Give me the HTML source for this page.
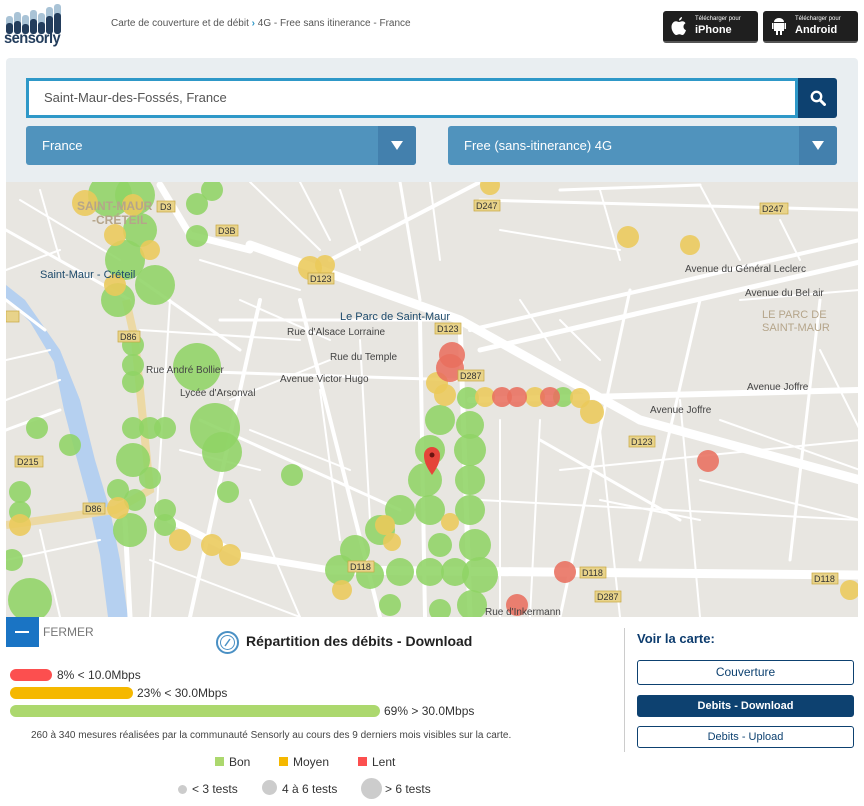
<!DOCTYPE html>
<html><head><meta charset="utf-8">
<style>
*{box-sizing:border-box;margin:0;padding:0}
body{width:864px;height:806px;background:#fff;font-family:"Liberation Sans",sans-serif;position:relative;overflow:hidden;color:#333}
.abs{position:absolute}
.btn{position:absolute;background:#1f1f1f;border-radius:3px;color:#fff;border-bottom:2px solid #555}
.btn small{position:absolute;left:32px;top:5px;font-size:6px}
.btn b{position:absolute;left:32px;top:13px;font-size:11px;font-weight:bold}
.dd{position:absolute;top:126px;height:39px;background:#5093bd;border-radius:3px;color:#fff;font-size:13px;line-height:39px;padding-left:16px}
.dd .ar{position:absolute;right:0;top:0;width:38px;height:39px;background:#4380ad;border-radius:0 3px 3px 0}
.dd .ar:after{content:"";position:absolute;left:13px;top:15px;border-left:6px solid transparent;border-right:6px solid transparent;border-top:9px solid #fff}
.bar{position:absolute;left:10px;height:12px;border-radius:6px}
.lab{position:absolute;font-size:12px;color:#333}
.vb{position:absolute;left:637px;width:217px;height:25px;border:1px solid #0d4170;border-radius:3px;text-align:center;font-size:12px;line-height:23px;color:#0d4170}
</style></head><body>
<!-- logo -->
<svg class="abs" style="left:6px;top:4px" width="58" height="30" viewBox="0 0 58 30">
<g fill="#a9c3d6"><rect x="0" y="12" width="7" height="18" rx="3"/><rect x="8" y="8" width="7" height="22" rx="3"/><rect x="16" y="11" width="7" height="19" rx="3"/><rect x="24" y="6" width="7" height="24" rx="3"/><rect x="32" y="9" width="7" height="21" rx="3"/><rect x="40" y="3" width="7" height="27" rx="3"/><rect x="48" y="0" width="7" height="30" rx="3"/></g>
<g fill="#233d5c"><rect x="0" y="19" width="7" height="11" rx="3"/><rect x="8" y="17" width="7" height="13" rx="3"/><rect x="16" y="20" width="7" height="10" rx="3"/><rect x="24" y="15" width="7" height="15" rx="3"/><rect x="32" y="18" width="7" height="12" rx="3"/><rect x="40" y="12" width="7" height="18" rx="3"/><rect x="48" y="9" width="7" height="21" rx="3"/></g>
</svg>
<div class="abs" style="left:4px;top:30px;font-size:16px;font-weight:bold;color:#233d5c;letter-spacing:-0.6px;transform:scaleX(0.92);transform-origin:left">sensorly</div>
<div class="abs" style="left:111px;top:18px;font-size:10px;color:#555">Carte de couverture et de débit <span style="color:#2e98c8;font-weight:bold">›</span> 4G - Free sans itinerance - France</div>
<div class="btn" style="left:663px;top:11px;width:95px;height:32px"><svg class="abs" style="left:8px;top:6px" width="16" height="19" viewBox="0 0 16 19"><path d="M11 0c0 2-1.5 3.5-3 3.5C8 1.8 9.5 0.2 11 0zM8 5c1 0 2-.8 3.2-.8 1.5 0 2.7.8 3.3 2-3 1.7-2.5 5.8.5 7-.7 2-2 4.8-3.6 4.8-1.2 0-1.6-.7-3-.7s-2 .7-3.1.7C3.5 18 .5 14 .5 10 .5 6.6 2.7 4.3 5 4.3c1.2 0 2.1.7 3 .7z" fill="#fff"/></svg><small>Télécharger pour</small><b>iPhone</b></div>
<div class="btn" style="left:763px;top:11px;width:95px;height:32px"><svg class="abs" style="left:9px;top:6px" width="14" height="19" viewBox="0 0 14 19"><path d="M2 5a5 4 0 0 1 10 0z M0 6h1.5v6H0z M12.5 6H14v6h-1.5z M2 6h10v8H2z M4 14h2v4H4z M8 14h2v4H8z" fill="#fff"/></svg><small>Télécharger pour</small><b>Android</b></div>
<!-- search panel -->
<div class="abs" style="left:6px;top:58px;width:852px;height:124px;background:#e9eef1;border-radius:4px 4px 0 0"></div>
<div class="abs" style="left:26px;top:78px;width:772px;height:40px;border:3px solid #2e98c8;background:#fff;font-size:13px;color:#555;line-height:34px;padding-left:15px">Saint-Maur-des-Fossés, France</div>
<div class="abs" style="left:798px;top:78px;width:39px;height:40px;background:#0d4170;border-radius:0 3px 3px 0"><svg class="abs" style="left:12px;top:12px" width="16" height="16" viewBox="0 0 16 16"><circle cx="6.5" cy="6.5" r="4.7" stroke="#fff" stroke-width="2.4" fill="none"/><path d="M10 10l4.5 4.5" stroke="#fff" stroke-width="3" stroke-linecap="round"/></svg></div>
<div class="dd" style="left:26px;width:390px">France<div class="ar"></div></div>
<div class="dd" style="left:448px;width:389px">Free (sans-itinerance) 4G<div class="ar"></div></div>
<!-- map -->
<svg class="abs" style="left:6px;top:182px" width="852" height="435" viewBox="6 182 852 435" font-family="Liberation Sans" font-size="10" fill="#444">
<rect x="6" y="182" width="852" height="435" fill="#e8e6e1"/>
<path d="M6 285 L25 300 L60 350 L80 400 L95 460 L110 510 L120 560 L128 617 L108 617 L100 555 L88 500 L75 452 L64 410 L54 362 L30 322 L6 298Z" fill="#b5d0f0"/>
<g stroke="#fff" stroke-linecap="round" fill="none" stroke-width="2">
<path d="M20 200 L120 260"/><path d="M40 190 L60 260"/><path d="M6 360 L50 350"/><path d="M6 400 L60 380"/><path d="M6 560 L100 540"/><path d="M40 530 L60 617"/><path d="M140 330 L300 340"/><path d="M170 300 L150 617"/><path d="M240 300 L330 340"/><path d="M150 560 L300 617"/><path d="M250 500 L300 617"/><path d="M230 400 L330 360"/><path d="M320 390 L340 540"/><path d="M360 340 L370 520"/><path d="M500 420 L500 617"/><path d="M540 420 L530 617"/><path d="M600 430 L620 617"/><path d="M680 400 L700 617"/><path d="M720 420 L860 470"/><path d="M700 480 L860 520"/><path d="M600 500 L700 520"/><path d="M740 300 L860 290"/><path d="M520 300 L560 360"/><path d="M560 320 L600 360"/><path d="M600 190 L620 260"/><path d="M700 185 L740 260"/><path d="M780 220 L800 260"/><path d="M820 350 L860 430"/><path d="M250 182 L320 250"/><path d="M300 182 L330 240"/><path d="M340 190 L360 250"/><path d="M430 182 L440 260"/><path d="M500 230 L620 250"/><path d="M180 450 L260 470"/><path d="M250 430 L350 470"/><path d="M560 470 L860 440"/><path d="M480 500 L860 520"/><path d="M6 270 L60 250"/><path d="M200 260 L300 290"/>
</g>
<g stroke="#fff" stroke-linecap="round" fill="none">
<path d="M250 245 L460 320 L640 420 L860 480" stroke-width="9"/>
<path d="M160 185 L190 235 L250 250" stroke-width="7"/>
<path d="M330 570 L860 575" stroke-width="9"/>
<path d="M170 520 L240 555 L330 570" stroke-width="7"/>
<path d="M470 400 L860 390" stroke-width="6"/>
<path d="M480 350 L860 262" stroke-width="5"/>
<path d="M470 330 L860 240" stroke-width="4"/>
<path d="M460 320 L470 617" stroke-width="5"/>
<path d="M420 320 L425 617" stroke-width="4"/>
<path d="M260 300 L190 617" stroke-width="4"/>
<path d="M300 300 L380 617" stroke-width="4"/>
<path d="M330 260 L480 182" stroke-width="4"/>
<path d="M400 182 L420 300" stroke-width="3"/>
<path d="M630 290 L560 617" stroke-width="3"/>
<path d="M700 300 L640 560" stroke-width="3"/>
<path d="M820 300 L790 560" stroke-width="3"/>
<path d="M540 440 L680 520" stroke-width="3"/>
<path d="M200 420 L400 510" stroke-width="3"/>
<path d="M150 370 L460 380" stroke-width="3"/>
<path d="M220 320 L440 320" stroke-width="3"/>
<path d="M6 230 L130 300" stroke-width="3"/>
<path d="M6 430 L60 410" stroke-width="3"/>
<path d="M140 280 L240 350" stroke-width="3"/>
<path d="M560 190 L700 185" stroke-width="3"/>
<path d="M480 200 L860 210" stroke-width="3"/>
<path d="M130 617 L125 520" stroke-width="5"/>
<path d="M6 300 L45 330" stroke-width="3"/>
</g>
<path d="M6 525 L115 510 L150 490 L135 340 L126 300" stroke="#ecd9a4" stroke-width="8" fill="none"/>
<g fill-opacity=".88">
<g fill="#8fd465">
<circle cx="110" cy="195" r="22"/><circle cx="135" cy="195" r="20"/><circle cx="140" cy="230" r="17"/><circle cx="125" cy="260" r="20"/><circle cx="155" cy="285" r="20"/><circle cx="118" cy="300" r="17"/><circle cx="197" cy="204" r="11"/><circle cx="212" cy="190" r="11"/><circle cx="197" cy="236" r="11"/>
<circle cx="133" cy="345" r="11"/><circle cx="133" cy="365" r="11"/><circle cx="133" cy="382" r="11"/><circle cx="197" cy="367" r="24"/><circle cx="215" cy="428" r="25"/><circle cx="222" cy="452" r="20"/><circle cx="37" cy="428" r="11"/><circle cx="70" cy="445" r="11"/><circle cx="133" cy="428" r="11"/><circle cx="150" cy="428" r="11"/><circle cx="165" cy="428" r="11"/><circle cx="133" cy="460" r="17"/><circle cx="150" cy="478" r="11"/><circle cx="118" cy="490" r="11"/><circle cx="135" cy="500" r="11"/><circle cx="292" cy="475" r="11"/><circle cx="228" cy="492" r="11"/><circle cx="20" cy="492" r="11"/><circle cx="20" cy="512" r="11"/><circle cx="165" cy="510" r="11"/><circle cx="165" cy="525" r="11"/><circle cx="130" cy="530" r="17"/><circle cx="30" cy="600" r="22"/><circle cx="12" cy="560" r="11"/>
<circle cx="470" cy="425" r="14"/><circle cx="470" cy="450" r="16"/><circle cx="470" cy="480" r="15"/><circle cx="470" cy="510" r="15"/><circle cx="475" cy="545" r="16"/><circle cx="480" cy="575" r="18"/><circle cx="472" cy="605" r="15"/>
<circle cx="440" cy="420" r="15"/><circle cx="430" cy="450" r="15"/><circle cx="425" cy="480" r="17"/><circle cx="430" cy="510" r="15"/><circle cx="400" cy="510" r="15"/><circle cx="380" cy="530" r="15"/><circle cx="355" cy="550" r="15"/><circle cx="340" cy="570" r="15"/><circle cx="370" cy="575" r="14"/><circle cx="400" cy="572" r="14"/><circle cx="430" cy="572" r="14"/><circle cx="455" cy="572" r="14"/><circle cx="440" cy="545" r="12"/><circle cx="390" cy="605" r="11"/><circle cx="440" cy="610" r="11"/><circle cx="563" cy="397" r="10"/><circle cx="468" cy="398" r="11"/>
</g>
<g fill="#ebc95a">
<circle cx="85" cy="203" r="13"/><circle cx="133" cy="205" r="11"/><circle cx="115" cy="235" r="11"/><circle cx="150" cy="250" r="10"/><circle cx="115" cy="285" r="11"/><circle cx="310" cy="268" r="12"/><circle cx="325" cy="265" r="10"/><circle cx="490" cy="185" r="10"/><circle cx="628" cy="237" r="11"/><circle cx="690" cy="245" r="10"/>
<circle cx="20" cy="525" r="11"/><circle cx="118" cy="508" r="11"/><circle cx="180" cy="540" r="11"/><circle cx="212" cy="545" r="11"/><circle cx="230" cy="555" r="11"/>
<circle cx="437" cy="383" r="11"/><circle cx="445" cy="395" r="11"/><circle cx="485" cy="397" r="10"/><circle cx="535" cy="397" r="10"/><circle cx="580" cy="398" r="10"/><circle cx="592" cy="412" r="12"/><circle cx="385" cy="525" r="10"/><circle cx="392" cy="542" r="9"/><circle cx="450" cy="522" r="9"/><circle cx="342" cy="590" r="10"/><circle cx="850" cy="590" r="10"/>
</g>
<g fill="#e8705f">
<circle cx="452" cy="355" r="13"/><circle cx="450" cy="368" r="14"/><circle cx="502" cy="397" r="10"/><circle cx="517" cy="397" r="10"/><circle cx="550" cy="397" r="10"/><circle cx="565" cy="572" r="11"/><circle cx="517" cy="605" r="11"/><circle cx="708" cy="461" r="11"/>
</g>
</g>
<path d="M432 475 C425 465 424 460 424 455 a8 8 0 0 1 16 0 c0 5-1 10-8 20z" fill="#e5443a"/><circle cx="432" cy="455" r="2.5" fill="#6b1410"/>
<g fill="#e8d38a" stroke="#c9a93f" stroke-width=".7">
<rect x="157" y="201" width="18" height="11"/><rect x="216" y="225" width="22" height="11"/><rect x="308" y="273" width="26" height="11"/><rect x="435" y="323" width="26" height="11"/><rect x="458" y="370" width="26" height="11"/><rect x="629" y="436" width="26" height="11"/><rect x="118" y="331" width="22" height="11"/><rect x="15" y="456" width="28" height="11"/><rect x="83" y="503" width="22" height="11"/><rect x="348" y="561" width="26" height="11"/><rect x="580" y="567" width="26" height="11"/><rect x="812" y="573" width="26" height="11"/><rect x="595" y="591" width="26" height="11"/><rect x="474" y="200" width="26" height="11"/><rect x="760" y="203" width="28" height="11"/><rect x="6" y="311" width="13" height="11"/>
</g>
<g font-size="9" fill="#333"><text x="160" y="210">D3</text><text x="218" y="234">D3B</text><text x="310" y="282">D123</text><text x="437" y="332">D123</text><text x="460" y="379">D287</text><text x="631" y="445">D123</text><text x="120" y="340">D86</text><text x="17" y="465">D215</text><text x="85" y="512">D86</text><text x="350" y="570">D118</text><text x="582" y="576">D118</text><text x="814" y="582">D118</text><text x="597" y="600">D287</text><text x="476" y="209">D247</text><text x="762" y="212">D247</text></g>
<text x="40" y="278" fill="#1d4a6b" font-size="11">Saint-Maur - Créteil</text>
<text x="340" y="320" fill="#1d4a6b" font-size="11">Le Parc de Saint-Maur</text>
<text x="77" y="210" fill="#b5a58a" font-size="12" font-weight="bold">SAINT-MAUR</text>
<text x="92" y="224" fill="#b5a58a" font-size="12" font-weight="bold">-CRÉTEIL</text>
<text x="762" y="318" fill="#b5a58a" font-size="11">LE PARC DE</text>
<text x="762" y="331" fill="#b5a58a" font-size="11">SAINT-MAUR</text>
<text x="287" y="335">Rue d'Alsace Lorraine</text>
<text x="330" y="360">Rue du Temple</text>
<text x="280" y="382">Avenue Victor Hugo</text>
<text x="146" y="373">Rue André Bollier</text>
<text x="180" y="396">Lycée d'Arsonval</text>
<text x="650" y="413">Avenue Joffre</text>
<text x="747" y="390">Avenue Joffre</text>
<text x="685" y="272">Avenue du Général Leclerc</text>
<text x="745" y="296">Avenue du Bel air</text>
<text x="485" y="615">Rue d'Inkermann</text>
</svg>
<!-- bottom -->
<div class="abs" style="left:6px;top:617px;width:33px;height:30px;background:#1a74c4"><div class="abs" style="left:9px;top:14px;width:14px;height:2px;background:#fff"></div></div>
<div class="abs" style="left:43px;top:625px;font-size:12px;color:#777">FERMER</div>
<svg class="abs" style="left:215px;top:630px" width="25" height="25" viewBox="0 0 25 25"><circle cx="12.5" cy="12.5" r="10.5" fill="none" stroke="#4a90c4" stroke-width="2"/><circle cx="12.5" cy="12.5" r="7" fill="none" stroke="#4a90c4" stroke-width="1"/><path d="M10 16l5-7" stroke="#4a90c4" stroke-width="1.5"/></svg>
<div class="abs" style="left:246px;top:633px;font-size:14px;font-weight:bold;color:#222">Répartition des débits - Download</div>
<div class="bar" style="top:669px;width:42px;background:#fc4f4f"></div><div class="lab" style="left:57px;top:668px">8% &lt; 10.0Mbps</div>
<div class="bar" style="top:687px;width:123px;background:#f5b800"></div><div class="lab" style="left:137px;top:686px">23% &lt; 30.0Mbps</div>
<div class="bar" style="top:705px;width:370px;background:#acd86e"></div><div class="lab" style="left:384px;top:704px">69% &gt; 30.0Mbps</div>
<div class="abs" style="left:31px;top:730px;font-size:10px;color:#444">260 à 340 mesures réalisées par la communauté Sensorly au cours des 9 derniers mois visibles sur la carte.</div>
<div class="abs" style="left:215px;top:757px;width:9px;height:9px;background:#acd86e"></div><div class="lab" style="left:229px;top:755px">Bon</div>
<div class="abs" style="left:279px;top:757px;width:9px;height:9px;background:#f5b800"></div><div class="lab" style="left:293px;top:755px">Moyen</div>
<div class="abs" style="left:358px;top:757px;width:9px;height:9px;background:#fc4f4f"></div><div class="lab" style="left:372px;top:755px">Lent</div>
<div class="abs" style="left:178px;top:785px;width:9px;height:9px;border-radius:50%;background:#ccc"></div><div class="lab" style="left:192px;top:782px">&lt; 3 tests</div>
<div class="abs" style="left:262px;top:780px;width:15px;height:15px;border-radius:50%;background:#ccc"></div><div class="lab" style="left:282px;top:782px">4 à 6 tests</div>
<div class="abs" style="left:361px;top:778px;width:21px;height:21px;border-radius:50%;background:#ccc"></div><div class="lab" style="left:385px;top:782px">&gt; 6 tests</div>
<div class="abs" style="left:624px;top:628px;width:1px;height:124px;background:#ccc"></div>
<div class="abs" style="left:637px;top:631px;font-size:13px;font-weight:bold;color:#0d3c6e">Voir la carte:</div>
<div class="vb" style="top:660px">Couverture</div>
<div class="vb" style="top:695px;height:22px;line-height:20px;background:#0d4170;color:#fff;font-weight:bold;font-size:11px">Debits - Download</div>
<div class="vb" style="top:726px;height:22px;line-height:20px;font-size:11px">Debits - Upload</div>
</body></html>
